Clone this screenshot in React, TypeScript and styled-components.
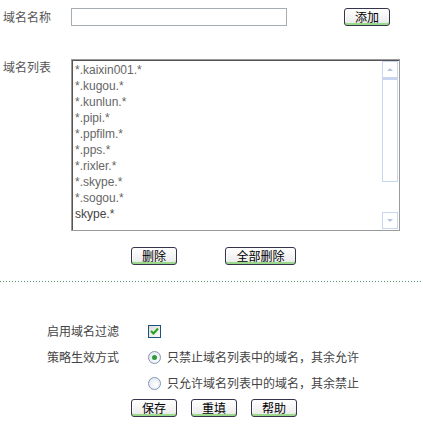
import React from "react";
import styled, { createGlobalStyle } from "styled-components";

const Global = createGlobalStyle`
  html, body { margin: 0; padding: 0; background: #fff; }
  body { font-family: "Liberation Sans", "Noto Sans CJK SC", sans-serif; font-size: 12px; color: #333; }
`;

const Page = styled.div`
  width: 423px;
  height: 424px;
  padding: 8px 0 0 3px;
  box-sizing: border-box;
  overflow: hidden;
`;

const FormRow = styled.div<{ $mt?: number }>`
  display: flex;
  align-items: flex-start;
  margin-top: ${(p) => p.$mt ?? 0}px;
`;

const Label = styled.div<{ $pt?: number }>`
  width: 68px;
  flex: none;
  font-family: "Noto Sans CJK SC", sans-serif;
  font-size: 12px;
  line-height: 16px;
  color: #555;
  padding-top: ${(p) => p.$pt ?? 0}px;
`;

const TextInput = styled.input`
  width: 216px;
  height: 18px;
  box-sizing: border-box;
  border: 1px solid #a5acb2;
  padding: 0 2px;
  margin: 0;
  outline: none;
  font: 12px "Liberation Sans", sans-serif;
`;

const Btn = styled.button<{ $w: number; $ml?: number }>`
  width: ${(p) => p.$w}px;
  height: 18px;
  margin: 0 0 0 ${(p) => p.$ml ?? 0}px;
  padding: 0;
  box-sizing: border-box;
  border: 1px solid #34344a;
  border-radius: 3px;
  background: linear-gradient(#ffffff, #f0f0f0 70%, #e6e6e6);
  box-shadow: inset 0 -2px 0 #9ad88a, inset 1px 1px 0 #fff;
  font-family: "Noto Sans CJK SC", sans-serif;
  font-size: 12px;
  line-height: 14px;
  color: #000;
  cursor: pointer;
  flex: none;
`;

const ListBox = styled.div`
  width: 329px;
  height: 172px;
  box-sizing: border-box;
  border: 1px solid #9a9a9a;
  box-shadow: inset 1px 1px 0 #555;
  display: flex;
  background: #fff;
`;

const Items = styled.div`
  flex: 1;
  padding: 2px 0 0 3px;
  overflow: hidden;
`;

const Item = styled.div<{ $dark?: boolean }>`
  font-family: "Liberation Sans", sans-serif;
  font-size: 12px;
  line-height: 16px;
  height: 16px;
  color: ${(p) => (p.$dark ? "#444" : "#666")};
  white-space: nowrap;
`;

const ScrollBar = styled.div`
  width: 16px;
  flex: none;
  margin: 1px 1px 1px 0;
  display: flex;
  flex-direction: column;
  background: #fff;
`;

const ScrollBtn = styled.div`
  height: 17px;
  box-sizing: border-box;
  border: 1px solid #c8d6f0;
  display: flex;
  align-items: center;
  justify-content: center;
  flex: none;
`;

const Thumb = styled.div`
  height: 104px;
  box-sizing: border-box;
  border: 1px solid #c8d6f0;
  border-top: 2px solid #c8d6f0;
  flex: none;
`;

const Track = styled.div`
  flex: 1;
`;

const Arrow = styled.div<{ $down?: boolean }>`
  width: 0;
  height: 0;
  border-left: 3px solid transparent;
  border-right: 3px solid transparent;
  ${(p) =>
    p.$down
      ? "border-top: 3px solid #b4c4e4;"
      : "border-bottom: 3px solid #b4c4e4;"}
`;

const ButtonRow = styled.div`
  display: flex;
  margin: 16px 0 0 128px;
`;

const Divider = styled.div`
  height: 1px;
  margin: 16px 0 0 -3px;
  width: 423px;
  background-image: linear-gradient(to right, #4f9a70 1px, transparent 1px);
  background-size: 3px 1px;
`;

const Options = styled.div`
  margin-top: 41px;
  display: grid;
  grid-template-columns: 116px auto;
  column-gap: 29px;
  row-gap: 10px;
  align-items: center;
`;

const OptLabel = styled.div`
  text-align: right;
  font-family: "Noto Sans CJK SC", sans-serif;
  font-size: 12px;
  line-height: 16px;
  color: #444;
`;

const Control = styled.div`
  display: flex;
  align-items: center;
  gap: 6px;
  font-family: "Noto Sans CJK SC", sans-serif;
  font-size: 12px;
  line-height: 16px;
  color: #444;
`;

const Check = styled.div`
  width: 13px;
  height: 13px;
  box-sizing: border-box;
  border: 1px solid #1c5180;
  background: linear-gradient(135deg, #dcdcd7, #fbfbf9);
  display: flex;
  align-items: center;
  justify-content: center;
`;

const Radio = styled.div<{ $on?: boolean }>`
  width: 13px;
  height: 13px;
  box-sizing: border-box;
  border-radius: 50%;
  border: 1px solid #7f96b5;
  background: radial-gradient(circle at 60% 60%, #fff, #dde2ea);
  display: flex;
  align-items: center;
  justify-content: center;
  &::after {
    content: "";
    display: ${(p) => (p.$on ? "block" : "none")};
    width: 5px;
    height: 5px;
    border-radius: 50%;
    background: #2f9a3a;
  }
`;

const BottomButtons = styled.div`
  display: flex;
  gap: 14px;
  margin: 8px 0 0 128px;
`;

const items = [
  "*.kaixin001.*",
  "*.kugou.*",
  "*.kunlun.*",
  "*.pipi.*",
  "*.ppfilm.*",
  "*.pps.*",
  "*.rixler.*",
  "*.skype.*",
  "*.sogou.*",
  "skype.*",
];

export default function App() {
  return (
    <>
      <Global />
      <Page>
        <FormRow>
          <Label $pt={1}>域名名称</Label>
          <TextInput />
          <Btn $w={46} $ml={57}>添加</Btn>
        </FormRow>
        <FormRow $mt={33}>
          <Label $pt={0}>域名列表</Label>
          <ListBox>
            <Items>
              {items.map((t, i) => (
                <Item key={t} $dark={i === items.length - 1}>{t}</Item>
              ))}
            </Items>
            <ScrollBar>
              <ScrollBtn><Arrow /></ScrollBtn>
              <Thumb />
              <Track />
              <ScrollBtn><Arrow $down /></ScrollBtn>
            </ScrollBar>
          </ListBox>
        </FormRow>
        <ButtonRow>
          <Btn $w={46}>删除</Btn>
          <Btn $w={71} $ml={48}>全部删除</Btn>
        </ButtonRow>
        <Divider />
        <Options>
          <OptLabel>启用域名过滤</OptLabel>
          <Control>
            <Check>
              <svg width="9" height="8" viewBox="0 0 9 8">
                <path d="M1 4 L3.5 6.5 L8 1.5" stroke="#21a121" strokeWidth="2" fill="none" />
              </svg>
            </Check>
          </Control>
          <OptLabel>策略生效方式</OptLabel>
          <Control>
            <Radio $on />
            只禁止域名列表中的域名，其余允许
          </Control>
          <div />
          <Control>
            <Radio />
            只允许域名列表中的域名，其余禁止
          </Control>
        </Options>
        <BottomButtons>
          <Btn $w={46}>保存</Btn>
          <Btn $w={46}>重填</Btn>
          <Btn $w={46}>帮助</Btn>
        </BottomButtons>
      </Page>
    </>
  );
}
